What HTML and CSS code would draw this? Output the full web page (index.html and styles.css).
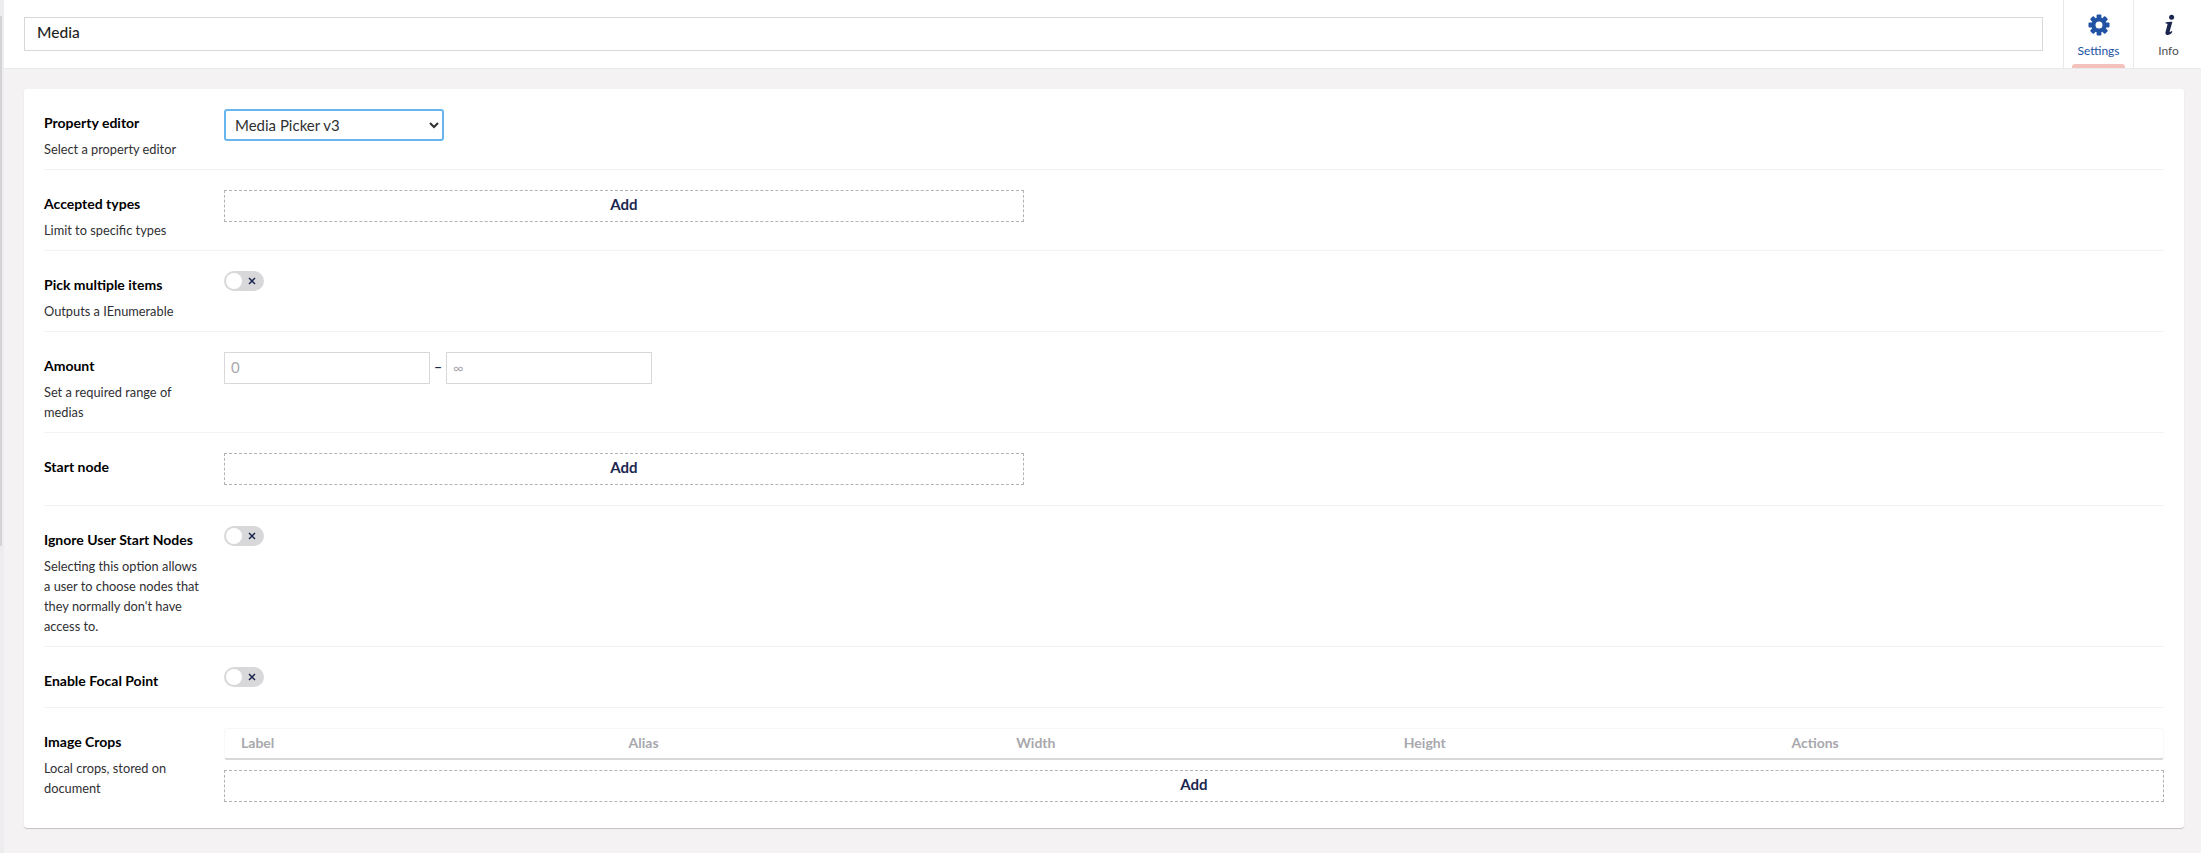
FILE: index.html
```html
<!DOCTYPE html>
<html lang="en">
<head>
<meta charset="utf-8">
<title>Media</title>
<link rel="stylesheet" href="styles.css">
</head>
<body>
<div class="app">
  <aside class="edge"><div class="edge-bar"></div></aside>
  <div class="main">
    <header class="header">
      <div class="title-wrap"><input class="title" type="text" value="Media"></div>
      <nav class="tabs">
        <a class="tab tab-active">
          <svg class="tab-icon" viewBox="0 0 22 22" width="22" height="22">
            <g fill="#2152a3">
              <path fill-rule="evenodd" d="M11 3.4a7.6 7.6 0 1 0 0 15.2 7.6 7.6 0 0 0 0-15.2zm0 4.1a3.5 3.5 0 1 1 0 7 3.5 3.5 0 0 1 0-7z"/>
              <rect x="8.6" y="0.5" width="4.8" height="4.4" rx="1"/>
              <rect x="8.6" y="17.1" width="4.8" height="4.4" rx="1"/>
              <rect x="0.5" y="8.6" width="4.4" height="4.8" rx="1"/>
              <rect x="17.1" y="8.6" width="4.4" height="4.8" rx="1"/>
              <rect x="8.6" y="0.5" width="4.8" height="4.4" rx="1" transform="rotate(45 11 11)"/>
              <rect x="8.6" y="17.1" width="4.8" height="4.4" rx="1" transform="rotate(45 11 11)"/>
              <rect x="0.5" y="8.6" width="4.4" height="4.8" rx="1" transform="rotate(45 11 11)"/>
              <rect x="17.1" y="8.6" width="4.4" height="4.8" rx="1" transform="rotate(45 11 11)"/>
            </g>
          </svg>
          <span class="tab-label">Settings</span>
          <span class="tab-marker"></span>
        </a>
        <a class="tab">
          <svg class="tab-icon" viewBox="0 0 22 22" width="22" height="22">
            <g fill="#1b264f">
              <circle cx="13.6" cy="3.2" r="2.5"/>
              <path d="M7.6 8.2l5.6-.5h1.2l-2.7 9.6c-.2.8.5 1 1.9-.4l.9.8c-1.6 2.5-3.6 3.4-5.2 3.2-1.6-.2-2.2-1.2-1.8-2.7l2-7.7c.2-.8-.4-1-1.9-1z"/>
            </g>
          </svg>
          <span class="tab-label">Info</span>
        </a>
      </nav>
    </header>

    <main class="content">
      <section class="card">
        <div class="row">
          <div class="meta">
            <div class="name">Property editor</div>
            <div class="desc">Select a property editor</div>
          </div>
          <div class="control">
            <select class="select"><option>Media Picker v3</option></select>
          </div>
        </div>

        <div class="row">
          <div class="meta">
            <div class="name">Accepted types</div>
            <div class="desc">Limit to specific types</div>
          </div>
          <div class="control">
            <button class="add add-narrow">Add</button>
          </div>
        </div>

        <div class="row">
          <div class="meta">
            <div class="name">Pick multiple items</div>
            <div class="desc">Outputs a IEnumerable</div>
          </div>
          <div class="control">
            <div class="toggle">
              <span class="knob"></span>
              <svg class="toggle-x" viewBox="0 0 8 8" width="8" height="8"><path d="M1 1l6 6M7 1l-6 6" stroke="#1b264f" stroke-width="1.5" fill="none"/></svg>
            </div>
          </div>
        </div>

        <div class="row">
          <div class="meta">
            <div class="name">Amount</div>
            <div class="desc">Set a required range of medias</div>
          </div>
          <div class="control range">
            <input class="num num-min" type="text" placeholder="0">
            <span class="dash">–</span>
            <input class="num num-max" type="text" placeholder="∞">
          </div>
        </div>

        <div class="row">
          <div class="meta">
            <div class="name">Start node</div>
          </div>
          <div class="control">
            <button class="add add-narrow">Add</button>
          </div>
        </div>

        <div class="row">
          <div class="meta">
            <div class="name">Ignore User Start Nodes</div>
            <div class="desc">Selecting this option allows a user to choose nodes that they normally don't have access to.</div>
          </div>
          <div class="control">
            <div class="toggle">
              <span class="knob"></span>
              <svg class="toggle-x" viewBox="0 0 8 8" width="8" height="8"><path d="M1 1l6 6M7 1l-6 6" stroke="#1b264f" stroke-width="1.5" fill="none"/></svg>
            </div>
          </div>
        </div>

        <div class="row">
          <div class="meta">
            <div class="name">Enable Focal Point</div>
          </div>
          <div class="control">
            <div class="toggle">
              <span class="knob"></span>
              <svg class="toggle-x" viewBox="0 0 8 8" width="8" height="8"><path d="M1 1l6 6M7 1l-6 6" stroke="#1b264f" stroke-width="1.5" fill="none"/></svg>
            </div>
          </div>
        </div>

        <div class="row row-last">
          <div class="meta">
            <div class="name">Image Crops</div>
            <div class="desc">Local crops, stored on document</div>
          </div>
          <div class="control">
            <div class="crop-head">
              <span class="crop-col">Label</span><span class="crop-col">Alias</span><span class="crop-col">Width</span><span class="crop-col">Height</span><span class="crop-col">Actions</span>
            </div>
            <button class="add add-wide">Add</button>
          </div>
        </div>
      </section>
    </main>
  </div>
</div>
</body>
</html>
```

FILE: styles.css
```css
* { box-sizing: border-box; }
html, body { margin: 0; height: 100%; }
body {
  font-family: Lato, "Open Sans", "Liberation Sans", sans-serif;
  font-size: 14px;
  line-height: 20px;
  color: #1b264f;
  background: #f4f2f3;
  overflow: hidden;
}
.app { display: flex; height: 853px; }
.edge { width: 4px; flex: none; background: #ededef; padding-top: 16px; }
.edge-bar { width: 2px; height: 530px; background: #d4d4d6; }
.main { flex: 1; min-width: 0; }

.header {
  display: flex;
  height: 69px;
  background: #fff;
  border-bottom: 1px solid #e9e9eb;
}
.title-wrap { flex: 1; padding: 17px 20px 0; }
.title {
  display: block;
  width: 100%;
  height: 34px;
  padding: 0 12px 5px;
  border: 1px solid #d8d7d9;
  border-radius: 0;
  font: 500 15.5px/27px Lato, sans-serif;
  color: #1f1f22;
  outline: none;
}
.tabs { display: flex; flex: none; }
.tab {
  position: relative;
  display: flex;
  flex-direction: column;
  align-items: center;
  width: 70px;
  padding-top: 14px;
  border-left: 1px solid #e9e9eb;
  font-size: 12px;
  color: #515054;
}
.tab:last-child { width: 68px; padding-left: 2px; }
.tab-icon { display: block; }
.tab-label { margin-top: 6px; line-height: 18px; }
.tab-active { color: #2152a3; }
.tab-marker {
  position: absolute;
  left: 8px;
  right: 8px;
  bottom: 0;
  height: 4px;
  background: #f5c1bc;
  border-radius: 3px 3px 0 0;
}

.content { padding: 20px 17px 0 20px; }
.card {
  background: #fff;
  border-radius: 3px;
  box-shadow: 0 1px 1px rgba(0, 0, 0, .2);
  padding: 20px;
}
.row {
  display: flex;
  border-bottom: 1px solid #f3f3f5;
  margin-bottom: 20px;
}
.row-last { border-bottom: 0; margin-bottom: 0; }
.meta { flex: none; width: 180px; padding: 4px 20px 10px 0; }
.name { font-weight: 700; color: #000; line-height: 20px; }
.desc { margin-top: 6px; font-size: 12.8px; line-height: 20px; color: #303033; }
.control { flex: 1; min-width: 0; padding-bottom: 20px; }
.row-last .control { padding-bottom: 0; }

.select {
  display: block;
  width: 220px;
  height: 32px;
  padding: 0 5px;
  border: 2px solid #68b5f0;
  border-radius: 3px;
  background-color: #fff;
  font: 400 15px Lato, sans-serif;
  color: #303033;
  outline: none;
}

.add {
  display: block;
  height: 32px;
  padding: 0 0 4px;
  border: 1px dashed #b3b3b7;
  background: #fff;
  font: 700 15px Lato, sans-serif;
  color: #1b264f;
  text-align: center;
}
.add-narrow { width: 800px; }
.add-wide { width: 100%; margin-top: 10px; }

.toggle {
  position: relative;
  width: 40px;
  height: 20px;
  border-radius: 10px;
  background: #d8d7d9;
}
.knob {
  position: absolute;
  left: 2px;
  top: 2px;
  width: 16px;
  height: 16px;
  border-radius: 50%;
  background: #fff;
}
.toggle-x { position: absolute; left: 24px; top: 6px; }

.range { display: flex; align-items: flex-start; }
.num {
  display: block;
  width: 206px;
  height: 32px;
  padding: 0 6px 2px;
  border: 1px solid #d8d7d9;
  border-radius: 0;
  font: 400 15px Lato, sans-serif;
  color: #303033;
  outline: none;
}
.num::placeholder { color: #a9a9ad; opacity: 1; }
.num-max { font-size: 14px; }
.dash {
  width: 16px;
  text-align: center;
  font-weight: 700;
  line-height: 29px;
  color: #1b264f;
}

.crop-head {
  display: grid;
  grid-template-columns: repeat(5, 1fr);
  height: 32px;
  border: 1px solid #f8f8f9;
  border-bottom: 2px solid #d8d7d9;
  border-radius: 3px;
  font-weight: 700;
  line-height: 27px;
  color: #a8a8ad;
}
.crop-col { padding-left: 16px; }
```
